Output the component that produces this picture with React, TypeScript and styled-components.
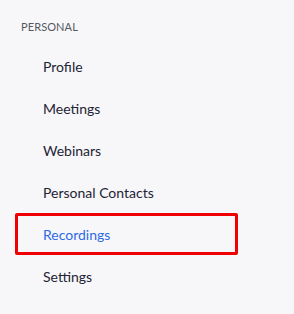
import React from "react";
import styled, { createGlobalStyle } from "styled-components";

const GlobalStyle = createGlobalStyle`
  html, body {
    margin: 0;
    padding: 0;
    background: #f7f7fa;
  }
  body {
    font-family: Lato, "Liberation Sans", sans-serif;
  }
`;

const Sidebar = styled.nav`
  width: 294px;
  height: 314px;
  background: #f7f7fa;
  padding-top: 20px;
  box-sizing: border-box;
`;

const SectionTitle = styled.div`
  height: 14px;
  line-height: 14px;
  margin: 0 0 11px;
  padding-left: 21px;
  font-size: 11px;
  color: #555861;
  letter-spacing: 0.1px;
`;

const List = styled.ul`
  list-style: none;
  margin: 0;
  padding: 0;
`;

const Item = styled.li<{ $active?: boolean }>`
  display: flex;
  align-items: center;
  box-sizing: border-box;
  height: 42px;
  width: 223px;
  margin-left: 15px;
  padding-left: 28px;
  font-size: 14px;
  color: ${(p) => (p.$active ? "#2e6ae6" : "#232333")};
  box-shadow: ${(p) => (p.$active ? "inset 0 0 0 3px #f00000" : "none")};
  border-radius: 2px;
  cursor: pointer;
`;

const items = [
  { name: "Profile" },
  { name: "Meetings" },
  { name: "Webinars" },
  { name: "Personal Contacts" },
  { name: "Recordings", active: true },
  { name: "Settings" },
];

const App = () => {
  return (
    <>
      <GlobalStyle />
      <Sidebar>
        <SectionTitle>PERSONAL</SectionTitle>
        <List>
          {items.map((item) => (
            <Item key={item.name} $active={item.active}>
              {item.name}
            </Item>
          ))}
        </List>
      </Sidebar>
    </>
  );
};

export default App;
